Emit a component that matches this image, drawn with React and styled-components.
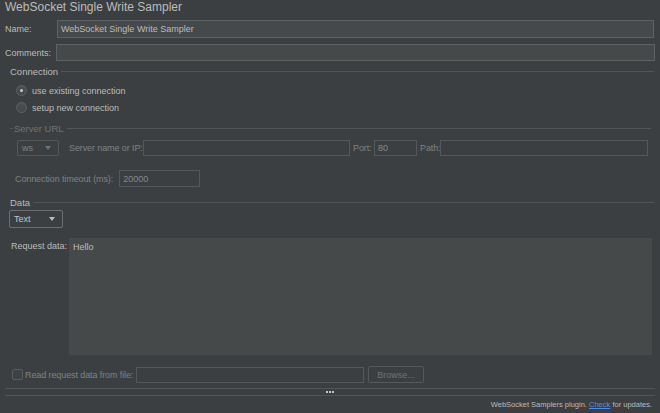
import React from 'react';
import styled, { createGlobalStyle } from 'styled-components';

const GlobalStyle = createGlobalStyle`
  html, body {
    margin: 0;
    padding: 0;
    background: #3c3f41;
    font-family: "Liberation Sans", Arial, sans-serif;
    color: #bbbbbb;
  }
  #root {
    width: 660px;
    height: 413px;
    overflow: hidden;
  }
`;

const App = () => {
  return (
    <>
      <GlobalStyle />
      <Page>
        <Title>WebSocket Single Write Sampler</Title>

        <FormRow $top={1}>
          <Label $w={52}>Name:</Label>
          <Field $h={18}>WebSocket Single Write Sampler</Field>
        </FormRow>
        <FormRow $top={6}>
          <Label $w={51}>Comments:</Label>
          <Field $h={17} $wide />
        </FormRow>

        <Legend $top={2}>
          <LegendText>Connection</LegendText>
          <LegendLine />
        </Legend>
        <RadioList>
          <RadioRow>
            <Radio $checked />
            <span>use existing connection</span>
          </RadioRow>
          <RadioRow>
            <Radio />
            <span>setup new connection</span>
          </RadioRow>
        </RadioList>

        <Legend $top={4} $inset={5} $lead>
          <LegendText $disabled>Server URL</LegendText>
          <LegendLine $end={4} />
        </Legend>
        <UrlRow>
          <Select $w={42} $disabled>
            <span>ws</span>
            <Arrow $disabled />
          </Select>
          <DimLabel $ml={10} $w={73}>Server name or IP:</DimLabel>
          <Field $h={16} $w={207} $ml={1} $disabled />
          <DimLabel $ml={2} $w={19}>Port:</DimLabel>
          <Field $h={16} $w={43} $ml={2} $disabled>80</Field>
          <DimLabel $ml={2} $w={20}>Path:</DimLabel>
          <Field $h={16} $w={208} $ml={0} $disabled />
        </UrlRow>
        <TimeoutRow>
          <DimLabel>Connection timeout (ms):</DimLabel>
          <Field $h={17} $w={81} $ml={6} $disabled>20000</Field>
        </TimeoutRow>

        <Legend $top={7}>
          <LegendText>Data</LegendText>
          <LegendLine />
        </Legend>
        <DataBody>
          <Select $w={54} $h={18}>
            <span>Text</span>
            <Arrow />
          </Select>
          <RequestRow>
            <Label $w={58} $pt={3}>Request data:</Label>
            <TextArea>Hello</TextArea>
          </RequestRow>
          <FileRow>
            <Checkbox />
            <DimLabel $ml={2} $w={111}>Read request data from file:</DimLabel>
            <Field $h={16} $w={228} $ml={0} $disabled />
            <Button>Browse...</Button>
          </FileRow>
        </DataBody>

        <Divider>
          <Dots>
            <i />
            <i />
            <i />
          </Dots>
        </Divider>
        <Footer>
          WebSocket Samplers plugin. <Link>Check</Link> for updates.
        </Footer>
      </Page>
    </>
  );
};

export default App;

const Page = styled.div`
  display: flex;
  flex-direction: column;
  padding: 0 5px 0 5px;
  font-size: 9px;
  box-sizing: border-box;
  width: 660px;
`;

const Title = styled.div`
  font-size: 12px;
  color: #bbbbbb;
  height: 20px;
  line-height: 16px;
  margin-top: -1px;
`;

const FormRow = styled.div`
  display: flex;
  align-items: center;
  margin-top: ${({ $top }) => $top || 0}px;
`;

const Label = styled.div`
  width: ${({ $w }) => $w}px;
  flex-shrink: 0;
  color: #bbbbbb;
  align-self: ${({ $pt }) => ($pt ? 'flex-start' : 'center')};
  padding-top: ${({ $pt }) => $pt || 0}px;
  white-space: nowrap;
`;

const DimLabel = styled.div`
  color: #7e8183;
  white-space: nowrap;
  margin-left: ${({ $ml }) => $ml || 0}px;
  width: ${({ $w }) => ($w ? `${$w}px` : 'auto')};
  flex-shrink: 0;
  overflow: visible;
  letter-spacing: -0.1px;
`;

const Field = styled.div`
  box-sizing: border-box;
  height: ${({ $h }) => $h}px;
  width: ${({ $w }) => ($w ? `${$w}px` : 'auto')};
  flex: ${({ $w }) => ($w ? '0 0 auto' : '1')};
  margin-left: ${({ $ml }) => $ml || 0}px;
  margin-right: ${({ $wide }) => ($wide ? 0 : 1)}px;
  background: ${({ $disabled }) => ($disabled ? '#3c3f41' : '#45494a')};
  border: 1px solid ${({ $disabled }) => ($disabled ? '#54585a' : '#5e6264')};
  color: ${({ $disabled }) => ($disabled ? '#84878a' : '#bbbbbb')};
  display: flex;
  align-items: center;
  padding-left: 3px;
  white-space: nowrap;
`;

const Legend = styled.div`
  display: flex;
  align-items: center;
  height: 16px;
  margin-top: ${({ $top }) => $top || 0}px;
  padding-left: ${({ $inset }) => $inset || 5}px;

  &::before {
    content: '';
    display: ${({ $lead }) => ($lead ? 'block' : 'none')};
    width: 3px;
    height: 1px;
    background: #515557;
    margin-right: 1px;
  }
`;

const LegendText = styled.span`
  font-size: 9.5px;
  color: ${({ $disabled }) => ($disabled ? '#6f7274' : '#bbbbbb')};
  white-space: nowrap;
`;

const LegendLine = styled.div`
  flex: 1;
  height: 1px;
  background: #515557;
  margin-left: 3px;
  margin-right: ${({ $end }) => $end || 1}px;
`;

const RadioList = styled.div`
  display: flex;
  flex-direction: column;
  margin-top: 3px;
  padding-left: 11px;
`;

const RadioRow = styled.div`
  display: flex;
  align-items: center;
  height: 17px;
  gap: 5px;
  color: #bbbbbb;
`;

const Radio = styled.span`
  box-sizing: border-box;
  width: 11px;
  height: 11px;
  border-radius: 50%;
  border: 1px solid #5d6163;
  background: linear-gradient(#4c5052, #43474a);
  display: flex;
  align-items: center;
  justify-content: center;

  &::after {
    content: '';
    width: 3px;
    height: 3px;
    border-radius: 50%;
    background: #c8c8c8;
    display: ${({ $checked }) => ($checked ? 'block' : 'none')};
  }
`;

const UrlRow = styled.div`
  display: flex;
  align-items: center;
  margin-top: 4px;
  padding-left: 12px;
`;

const Select = styled.div`
  box-sizing: border-box;
  width: ${({ $w }) => $w}px;
  height: ${({ $h }) => $h || 16}px;
  border: 1px solid ${({ $disabled }) => ($disabled ? '#54585a' : '#6b6f71')};
  border-radius: 2px;
  display: flex;
  align-items: center;
  justify-content: space-between;
  padding: 0 7px 0 4px;
  color: ${({ $disabled }) => ($disabled ? '#7e8183' : '#c4c4c4')};
  flex-shrink: 0;
`;

const Arrow = styled.span`
  width: 0;
  height: 0;
  border-left: 3px solid transparent;
  border-right: 3px solid transparent;
  border-top: 4px solid ${({ $disabled }) => ($disabled ? '#6f7274' : '#bbbbbb')};
`;

const TimeoutRow = styled.div`
  display: flex;
  align-items: center;
  margin-top: 14px;
  padding-left: 10px;
`;

const DataBody = styled.div`
  display: flex;
  flex-direction: column;
  padding-left: 4px;
`;

const RequestRow = styled.div`
  display: flex;
  margin-top: 10px;
  padding-left: 2px;
`;

const TextArea = styled.div`
  box-sizing: border-box;
  width: 583px;
  height: 117px;
  background: #45494a;
  color: #bbbbbb;
  padding: 4px 4px;
  font-size: 9px;
`;

const FileRow = styled.div`
  display: flex;
  align-items: center;
  margin-top: 11px;
  padding-left: 3px;
`;

const Checkbox = styled.span`
  box-sizing: border-box;
  width: 11px;
  height: 11px;
  border: 1px solid #595d5f;
  border-radius: 2px;
  background: #3f4244;
  flex-shrink: 0;
`;

const Button = styled.div`
  box-sizing: border-box;
  width: 56px;
  height: 17px;
  margin-left: 3px;
  border: 1px solid #55595b;
  border-radius: 2px;
  color: #6f7274;
  display: flex;
  align-items: center;
  justify-content: center;
`;

const Divider = styled.div`
  margin-top: 5px;
  height: 6px;
  border-top: 1px solid #515557;
  border-bottom: 1px solid #515557;
  display: flex;
  align-items: center;
  justify-content: center;
`;

const Dots = styled.div`
  display: flex;
  gap: 1px;

  i {
    width: 2px;
    height: 2px;
    background: #c4c4c4;
  }
`;

const Footer = styled.div`
  text-align: right;
  color: #bbbbbb;
  font-size: 7.5px;
  padding-top: 4px;
  padding-right: 3px;
`;

const Link = styled.span`
  color: #4e8ee8;
  text-decoration: underline;
`;
